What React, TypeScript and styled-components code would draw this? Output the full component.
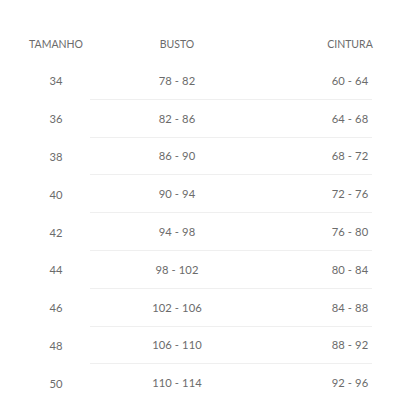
import React from "react";
import styled, { createGlobalStyle } from "styled-components";

const GlobalStyle = createGlobalStyle`
    html, body {
        margin: 0;
        padding: 0;
        background: #ffffff;
    }
    body {
        font-family: Lato, "Open Sans", sans-serif;
        -webkit-font-smoothing: antialiased;
    }
`;

const SizeTable = styled.div`
    width: 420px;
    padding: 26px 0 0 22px;
    box-sizing: border-box;
    color: #6b6b6b;
`;

const Row = styled.div<{ $header?: boolean }>`
    display: flex;
    height: ${(p) => (p.$header ? "36px" : "37.8px")};
    font-size: ${(p) => (p.$header ? "10.5px" : "11.2px")};
    letter-spacing: ${(p) => (p.$header ? "0" : "0.1px")};
    text-transform: ${(p) => (p.$header ? "uppercase" : "none")};
`;

const SizeCell = styled.div`
    width: 68px;
    display: flex;
    align-items: center;
    justify-content: center;
    white-space: nowrap;
`;

const Measures = styled.div<{ $lined?: boolean }>`
    width: 282px;
    display: flex;
    align-items: center;
    box-sizing: border-box;
    border-bottom: 1px solid ${(p) => (p.$lined ? "#efefef" : "transparent")};
`;

const BustCell = styled.div`
    width: 174px;
    display: flex;
    justify-content: center;
    white-space: nowrap;
`;

const WaistCell = styled.div`
    width: 44px;
    margin-left: auto;
    display: flex;
    justify-content: center;
    white-space: nowrap;
`;

const rows = [
    { size: "34", bust: "78 - 82", waist: "60 - 64" },
    { size: "36", bust: "82 - 86", waist: "64 - 68" },
    { size: "38", bust: "86 - 90", waist: "68 - 72" },
    { size: "40", bust: "90 - 94", waist: "72 - 76" },
    { size: "42", bust: "94 - 98", waist: "76 - 80" },
    { size: "44", bust: "98 - 102", waist: "80 - 84" },
    { size: "46", bust: "102 - 106", waist: "84 - 88" },
    { size: "48", bust: "106 - 110", waist: "88 - 92" },
    { size: "50", bust: "110 - 114", waist: "92 - 96" },
];

export default function App() {
    return (
        <>
            <GlobalStyle />
            <SizeTable>
                <Row $header>
                    <SizeCell>Tamanho</SizeCell>
                    <Measures>
                        <BustCell>Busto</BustCell>
                        <WaistCell>Cintura</WaistCell>
                    </Measures>
                </Row>
                {rows.map((row, i) => (
                    <Row key={row.size}>
                        <SizeCell>{row.size}</SizeCell>
                        <Measures $lined={i < rows.length - 1}>
                            <BustCell>{row.bust}</BustCell>
                            <WaistCell>{row.waist}</WaistCell>
                        </Measures>
                    </Row>
                ))}
            </SizeTable>
        </>
    );
}
